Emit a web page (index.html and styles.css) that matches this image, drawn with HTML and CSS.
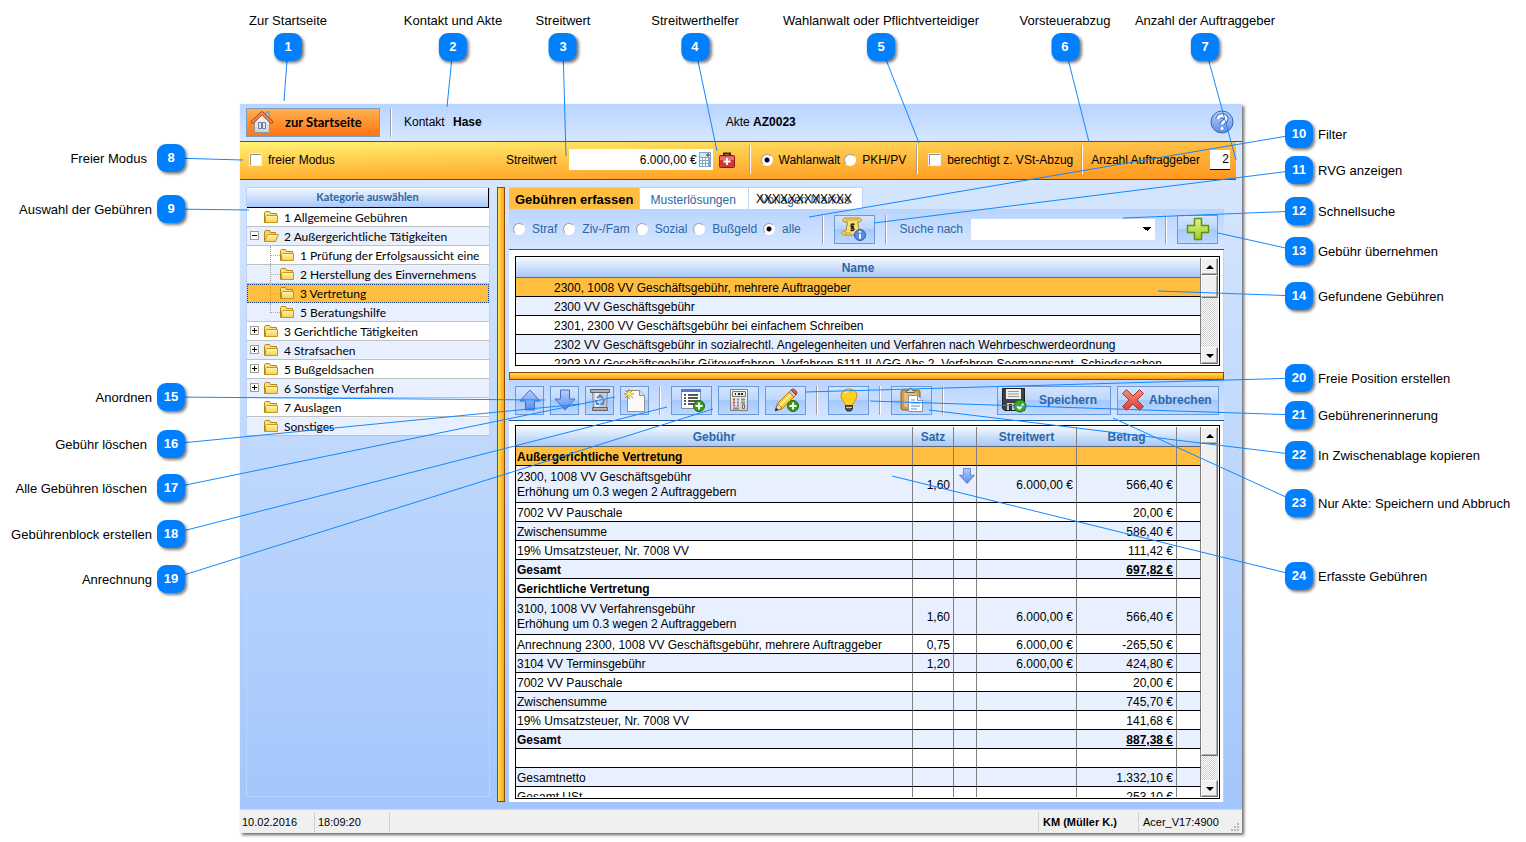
FILE: index.html
```html
<!DOCTYPE html>
<html lang="de">
<head>
    <meta charset="utf-8">
    <title>Gebühren erfassen</title>
    <link rel="stylesheet" href="styles.css">
</head>
<body>
    <svg class="defs" width="0" height="0" aria-hidden="true">
        <defs>
            <linearGradient id="gBlue" x1="0" y1="0" x2="0" y2="1"><stop offset="0" stop-color="#b4d0ff"/><stop offset="1" stop-color="#5c8ce8"/></linearGradient>
            <linearGradient id="gFolder" x1="0" y1="0" x2="0" y2="1"><stop offset="0" stop-color="#fff6b0"/><stop offset="1" stop-color="#f4cf52"/></linearGradient>
            <linearGradient id="gGreen" x1="0" y1="0" x2="0" y2="1"><stop offset="0" stop-color="#e2f08a"/><stop offset="1" stop-color="#a4cc28"/></linearGradient>
            <linearGradient id="gRed" x1="0" y1="0" x2="0" y2="1"><stop offset="0" stop-color="#f49070"/><stop offset="1" stop-color="#d83c3c"/></linearGradient>
            <linearGradient id="gGrey" x1="0" y1="0" x2="0" y2="1"><stop offset="0" stop-color="#ffffff"/><stop offset="1" stop-color="#d0d0d0"/></linearGradient>
        </defs>
        <symbol id="folder" viewBox="0 0 16 14">
            <path d="M1.5 12.5V2.5L2.5 1.5H6.5L7.5 3.5H13.5V12.5Z" fill="#f9e28a" stroke="#b8860b"/>
            <path d="M3.5 5.5H14.5V12.5H2.5V6.5Z" fill="url(#gFolder)" stroke="#c8961e"/>
        </symbol>
        <symbol id="folder-open" viewBox="0 0 16 14">
            <path d="M1.5 12.5V2.5L2.5 1.5H6.5L7.5 3.5H12.5V12.5Z" fill="#f3d468" stroke="#b8860b"/>
            <path d="M4.5 5.5H15.5L12.5 12.5H1.5Z" fill="url(#gFolder)" stroke="#c8961e"/>
        </symbol>
        <symbol id="arrow-up" viewBox="0 0 24 24">
            <path d="M12 2L22 13H16.500V22H7.500V13H2Z" fill="url(#gBlue)" stroke="#4a6eb8" stroke-linejoin="round"/>
        </symbol>
        <symbol id="arrow-down" viewBox="0 0 24 24">
            <path d="M12 22L2 11H7.500V2H16.500V11H22Z" fill="url(#gBlue)" stroke="#4a6eb8" stroke-linejoin="round"/>
        </symbol>
        <symbol id="badge-plus" viewBox="0 0 12 12">
            <circle cx="6" cy="6" r="5.500" fill="#3a9c1c" stroke="#226a0c"/>
            <path d="M6 2.500V9.500M2.500 6H9.500" stroke="#fff" stroke-width="2"/>
        </symbol>
    </svg>

    <main class="window">
        <header class="titlebar">
            <button type="button" class="home">
                <svg width="24" height="24" viewBox="0 0 24 24">
                    <path d="M16 2H19V9H16Z" fill="#b8c4d8" stroke="#7888a4"/>
                    <path d="M4.500 12L12 4L19.500 12V22.500H4.500Z" fill="url(#gGrey)" stroke="#8c96a8"/>
                    <path d="M2.500 12L12 3L21.500 12" fill="none" stroke="#a03c10" stroke-width="3.500" stroke-linejoin="round" stroke-linecap="round"/>
                    <path d="M2.500 12L12 3L21.500 12" fill="none" stroke="#f08a4c" stroke-width="2" stroke-linejoin="round" stroke-linecap="round"/>
                    <path d="M8.500 12.500H11.500V18.500H8.500ZM12.500 12.500H15.500V18.500H12.500Z" fill="#dfe8f6" stroke="#6c7c98"/>
                </svg>
                <span>zur Startseite</span>
            </button>
            <span class="sep"></span>
            <span class="contact">Kontakt <b>Hase</b></span>
            <span class="akte">Akte <b>AZ0023</b></span>
            <button type="button" class="help" aria-label="Hilfe">
                <svg width="24" height="24" viewBox="0 0 24 24">
                    <circle cx="12" cy="12" r="11" fill="url(#gBlue)" stroke="#3c64b4"/>
                    <path d="M8 9C8 4.500 16 4.500 16 9C16 12 12 11.500 12 14.500" fill="none" stroke="#3c64b4" stroke-width="5"/>
                    <path d="M8 9C8 4.500 16 4.500 16 9C16 12 12 11.500 12 14.500" fill="none" stroke="#fff" stroke-width="3"/>
                    <circle cx="12" cy="18.500" r="2" fill="#fff" stroke="#3c64b4" stroke-width=".5"/>
                </svg>
            </button>
        </header>

        <form class="options">
            <label class="check free"><input type="checkbox"> freier Modus</label>
            <label for="streitwert" class="value-label">Streitwert</label>
            <div class="value-box">
                <input type="text" id="streitwert" value="6.000,00 €">
                <svg width="12" height="15" viewBox="0 0 12 15">
                    <path d="M0 0H12V15H0Z" fill="#7fa8c8"/><path d="M1 1H11V5H1Z" fill="#d4e8f4"/><path d="M7 1H11V5H7Z" fill="#fff"/><circle cx="9" cy="3" r="1.200" fill="none" stroke="#222"/>
                    <path d="M1 6H3V8H1ZM4 6H6V8H4ZM7 6H9V8H7ZM1 9H3V11H1ZM4 9H6V11H4ZM7 9H9V11H7ZM1 12H3V14H1ZM4 12H6V14H4ZM7 12H9V14H7Z" fill="#fff"/>
                </svg>
            </div>
            <button type="button" class="kit" aria-label="Streitwerthelfer">
                <svg width="16" height="16" viewBox="0 0 16 16">
                    <path d="M5 4V1.500H11V4" fill="none" stroke="#402018" stroke-width="2"/>
                    <rect x=".5" y="3.500" width="15" height="12" rx="1" fill="#d03838" stroke="#8c1c1c"/>
                    <path d="M1 4.500H15V8H1Z" fill="#e87070"/>
                    <path d="M8 6V13M4.500 9.500H11.500" stroke="#fff" stroke-width="2"/>
                </svg>
            </button>
            <span class="sep"></span>
            <label class="check"><input type="radio" name="anwalt" checked> Wahlanwalt</label>
            <label class="check"><input type="radio" name="anwalt"> PKH/PV</label>
            <span class="sep"></span>
            <label class="check"><input type="checkbox"> berechtigt z. VSt-Abzug</label>
            <span class="sep narrow"></span>
            <label for="anzahl">Anzahl Auftraggeber</label>
            <input type="text" id="anzahl" class="count" value="2">
        </form>

        <div class="work">
            <section class="categories">
                <h2>Kategorie auswählen</h2>
                <ul class="tree">
                    <li><svg><use href="#folder"/></svg>1 Allgemeine Gebühren</li>
                    <li><button type="button" class="toggle open" aria-label="Zuklappen"></button><svg><use href="#folder-open"/></svg>2 Außergerichtliche Tätigkeiten</li>
                    <li class="child"><svg><use href="#folder"/></svg>1 Prüfung der Erfolgsaussicht eine</li>
                    <li class="child"><svg><use href="#folder"/></svg>2 Herstellung des Einvernehmens</li>
                    <li class="child selected"><svg><use href="#folder"/></svg>3 Vertretung</li>
                    <li class="child last"><svg><use href="#folder"/></svg>5 Beratungshilfe</li>
                    <li><button type="button" class="toggle" aria-label="Aufklappen"></button><svg><use href="#folder"/></svg>3 Gerichtliche Tätigkeiten</li>
                    <li><button type="button" class="toggle" aria-label="Aufklappen"></button><svg><use href="#folder"/></svg>4 Strafsachen</li>
                    <li><button type="button" class="toggle" aria-label="Aufklappen"></button><svg><use href="#folder"/></svg>5 Bußgeldsachen</li>
                    <li><button type="button" class="toggle" aria-label="Aufklappen"></button><svg><use href="#folder"/></svg>6 Sonstige Verfahren</li>
                    <li><svg><use href="#folder"/></svg>7 Auslagen</li>
                    <li><svg><use href="#folder"/></svg>Sonstiges</li>
                </ul>
            </section>

            <div class="splitter-v"></div>

            <section class="fees">
                <nav class="tabs">
                    <button type="button" class="tab active">Gebühren erfassen</button>
                    <button type="button" class="tab">Musterlösungen</button>
                    <button type="button" class="tab crossed">Vorlagen Markus<span>XXXXXXXXXXXX</span></button>
                </nav>

                <form class="toolbar filter">
                    <label class="check"><input type="radio" name="filter"> Straf</label>
                    <label class="check"><input type="radio" name="filter"> Ziv-/Fam</label>
                    <label class="check"><input type="radio" name="filter"> Sozial</label>
                    <label class="check"><input type="radio" name="filter"> Bußgeld</label>
                    <label class="check"><input type="radio" name="filter" checked> alle</label>
                    <span class="sep push"></span>
                    <button type="button" class="tool wide" aria-label="RVG anzeigen">
                        <svg width="26" height="26" viewBox="0 0 26 26">
                            <path d="M4 2H18C21 2 21 6 18 6H16.500L19 19H6L3.500 19C0 19 0 15 3.500 15H5L6.500 6H4C1 6 1 2 4 2Z" fill="#f8e070" stroke="#b08a1c"/>
                            <path d="M4 4H18M3 17H10" stroke="#c8a030"/>
                            <path d="M13.500 8.500C10 7 9 10 11.500 11.500C14.500 13 12.500 15.500 9.500 14M13 10.500C10 9.500 9.500 12 11.500 13" fill="none" stroke="#222" stroke-width="1.400"/>
                            <circle cx="19" cy="19" r="5.500" fill="#5c8ce0" stroke="#2c58ac"/>
                            <path d="M19 15V16.800M19 18V22.500" stroke="#fff" stroke-width="2"/>
                        </svg>
                    </button>
                    <span class="sep"></span>
                    <label for="suche" class="search-label">Suche nach</label>
                    <select id="suche"><option></option></select>
                    <span class="sep"></span>
                    <button type="button" class="tool wide" aria-label="Gebühr übernehmen">
                        <svg width="24" height="24" viewBox="0 0 24 24"><path d="M8.500 1.500H15.500V8.500H22.500V15.500H15.500V22.500H8.500V15.500H1.500V8.500H8.500Z" fill="url(#gGreen)" stroke="#5c9410" stroke-width="1.500" stroke-linejoin="round"/></svg>
                    </button>
                </form>

                <div class="panel found">
                    <div class="grid-box">
                        <div class="grid-view">
                            <table class="grid names">
                                <thead><tr><th>Name</th></tr></thead>
                                <tbody>
                                    <tr class="current"><td>2300, 1008 VV Geschäftsgebühr, mehrere Auftraggeber</td></tr>
                                    <tr><td>2300 VV Geschäftsgebühr</td></tr>
                                    <tr><td>2301, 2300 VV Geschäftsgebühr bei einfachem Schreiben</td></tr>
                                    <tr><td>2302 VV Geschäftsgebühr in sozialrechtl. Angelegenheiten und Verfahren nach Wehrbeschwerdeordnung</td></tr>
                                    <tr><td>2303 VV Geschäftsgebühr Güteverfahren, Verfahren §111 II AGG Abs.2, Verfahren Seemannsamt, Schiedssachen</td></tr>
                                </tbody>
                            </table>
                        </div>
                        <div class="scrollbar">
                            <button type="button" class="up" aria-label="Nach oben"></button>
                            <div class="thumb"></div>
                            <button type="button" class="down" aria-label="Nach unten"></button>
                        </div>
                    </div>
                </div>

                <div class="splitter-h"></div>

                <div class="toolbar actions">
                    <button type="button" class="tool" aria-label="Nach oben"><svg width="24" height="24"><use href="#arrow-up"/></svg></button>
                    <button type="button" class="tool" aria-label="Nach unten"><svg width="24" height="24"><use href="#arrow-down"/></svg></button>
                    <button type="button" class="tool" aria-label="Gebühr löschen">
                        <svg width="24" height="24" viewBox="0 0 24 24">
                            <path d="M4.500 4H19.500L18.500 20H5.500Z" fill="#c4ccd8" stroke="#888"/>
                            <path d="M7 5H11V20H7Z" fill="#eceff4"/>
                            <path d="M2.500 1.500H21.500V4.500H2.500ZM4.500 19.500H19.500V22.500H4.500Z" fill="#b0b0b0" stroke="#606060"/>
                            <path d="M9 10L12 7.500L15 10M16 12L15 16H12.500M8 12L9 16H11" fill="none" stroke="#5080d8" stroke-width="2"/>
                        </svg>
                    </button>
                    <button type="button" class="tool" aria-label="Alle Gebühren löschen">
                        <svg width="24" height="24" viewBox="0 0 24 24">
                            <path d="M4.500 2.500H16.500L21.500 7.500V23.500H4.500Z" fill="#fafafa" stroke="#909090"/>
                            <path d="M16.500 2.500V7.500H21.500" fill="#ddd" stroke="#909090"/>
                            <path d="M6 1V11M1 6H11M2 2L10 10M10 2L2 10" stroke="#b89000"/><circle cx="6" cy="6" r="2" fill="#fff060"/>
                        </svg>
                    </button>
                    <span class="sep"></span>
                    <button type="button" class="tool wide" aria-label="Gebührenblock erstellen">
                        <svg width="26" height="26" viewBox="0 0 26 26">
                            <path d="M2.500 2.500H21.500V21.500H2.500Z" fill="#fff" stroke="#8090a8"/><path d="M2 2H22V5H2Z" fill="#4c7cd8"/>
                            <path d="M5 8H7M5 11H7M5 14H7M5 17H7M9 8H19M9 11H19M9 14H19M9 17H15" stroke="#222" stroke-width="1.500"/>
                            <use href="#badge-plus" x="14" y="13" width="12" height="12"/>
                        </svg>
                    </button>
                    <button type="button" class="tool wide" aria-label="Anrechnung">
                        <svg width="24" height="24" viewBox="0 0 24 24">
                            <path d="M3.500 1.500H20.500V22.500H3.500Z" fill="url(#gGrey)" stroke="#808080"/>
                            <path d="M5.500 3.500H18.500V8.500H5.500Z" fill="#e0ece0" stroke="#707870"/>
                            <path d="M8 6H9M11 6H13M14 6H16" stroke="#222" stroke-width="2"/>
                            <path d="M6 11.500H8M6 14.500H8" stroke="#c83c3c" stroke-width="2"/>
                            <path d="M10 11.500H12M14 11.500H18M10 14.500H12M14 14.500H18M6 17.500H8M10 17.500H12M6 20.500H12" stroke="#888" stroke-width="2"/>
                            <path d="M15.500 16.500H17.500V20.500H15.500Z" fill="#ddd" stroke="#666"/>
                        </svg>
                    </button>
                    <button type="button" class="tool wide" aria-label="Freie Position erstellen">
                        <svg width="26" height="26" viewBox="0 0 26 26">
                            <path d="M2 24L4.500 16.500L9.500 21.500Z" fill="#f0d8b0" stroke="#806030"/><path d="M2 24L3 20.500L5.500 23Z" fill="#333"/>
                            <path d="M4.500 16.500L16 5L21 10L9.500 21.500Z" fill="#f8c838" stroke="#b88414"/><path d="M7 18.500L18 7.500" stroke="#fff090" stroke-width="2"/>
                            <path d="M16 5L18 3L23 8L21 10Z" fill="#c8ccd0" stroke="#888"/><path d="M18 3C20 0 26 5 23 8Z" fill="#e05858" stroke="#a83030"/>
                            <use href="#badge-plus" x="14" y="13" width="12" height="12"/>
                        </svg>
                    </button>
                    <span class="sep"></span>
                    <button type="button" class="tool wide" aria-label="Gebührenerinnerung">
                        <svg width="24" height="24" viewBox="0 0 24 24">
                            <path d="M12 1C6 1 3 5 4.500 10C5.500 13 8 14 8.500 17.500H15.500C16 14 18.500 13 19.500 10C21 5 18 1 12 1Z" fill="#ffd020" stroke="#d09000"/>
                            <path d="M8 5C9 3 11 3 12 3" fill="none" stroke="#fff8b0" stroke-width="2"/>
                            <path d="M8.500 17.500H15.500V21L14 23H10L8.500 21Z" fill="#555" stroke="#333"/><path d="M9 19.500H15" stroke="#ccc"/>
                        </svg>
                    </button>
                    <span class="sep"></span>
                    <button type="button" class="tool wide" aria-label="In Zwischenablage kopieren">
                        <svg width="26" height="26" viewBox="0 0 26 26">
                            <rect x="2" y="3" width="19" height="20" rx="2" fill="#d09c4c" stroke="#8c6424"/><path d="M5 6H18V20H5Z" fill="#e4bc78"/>
                            <path d="M7.500 5.500V3.500H9.500C9.500 .5 13.500 .5 13.500 3.500H15.500V5.500Z" fill="#d8d8d8" stroke="#666"/>
                            <path d="M9.500 8.500H18.500L23.500 13.500V24.500H9.500Z" fill="#fff" stroke="#8494b0"/><path d="M18.500 8.500V13.500H23.500" fill="#dde6f4" stroke="#8494b0"/>
                            <path d="M12 13H16M12 16H21M12 19H21M12 22H18" stroke="#5c8cd8"/>
                        </svg>
                    </button>
                    <span class="sep"></span>
                    <button type="button" class="tool save">
                        <svg width="26" height="26" viewBox="0 0 26 26">
                            <path d="M1.500 1.500H23.500V23.500H3.500L1.500 21.500Z" fill="#3c4048" stroke="#202020"/><path d="M5 2H20V12H5Z" fill="#f0f0f0"/>
                            <path d="M7 4.500H18M7 7H18M7 9.500H18" stroke="#999"/><path d="M6 16H18V23H6Z" fill="#c4ccd4"/><path d="M8 17H11V23H8Z" fill="#333"/>
                            <circle cx="19" cy="19" r="6" fill="#3aac24" stroke="#1c7410"/><path d="M16 19L18.500 21.500L22.500 17" fill="none" stroke="#fff" stroke-width="2"/>
                        </svg>
                        <span>Speichern</span>
                    </button>
                    <button type="button" class="tool cancel">
                        <svg width="24" height="24" viewBox="0 0 24 24"><path d="M5.500 1.500L12 8L18.500 1.500L22.500 5.500L16 12L22.500 18.500L18.500 22.500L12 16L5.500 22.500L1.500 18.500L8 12L1.500 5.500Z" fill="url(#gRed)" stroke="#a83430" stroke-linejoin="round"/></svg>
                        <span>Abbrechen</span>
                    </button>
                </div>

                <div class="panel recorded">
                    <div class="grid-box">
                        <div class="grid-view">
                            <table class="grid positions">
                                <colgroup><col><col class="c-satz"><col class="c-icon"><col class="c-money"><col class="c-money"><col class="c-end"></colgroup>
                                <thead><tr><th>Gebühr</th><th>Satz</th><th></th><th>Streitwert</th><th>Betrag</th><th></th></tr></thead>
                                <tbody>
                                    <tr class="current"><td><b>Außergerichtliche Vertretung</b></td><td></td><td></td><td></td><td></td><td></td></tr>
                                    <tr class="double"><td>2300, 1008 VV Geschäftsgebühr<br>Erhöhung um 0.3 wegen 2 Auftraggebern</td><td>1,60</td><td class="mark"><svg width="18" height="18"><use href="#arrow-down"/></svg></td><td>6.000,00 €</td><td>566,40 €</td><td></td></tr>
                                    <tr><td>7002 VV Pauschale</td><td></td><td></td><td></td><td>20,00 €</td><td></td></tr>
                                    <tr><td>Zwischensumme</td><td></td><td></td><td></td><td>586,40 €</td><td></td></tr>
                                    <tr><td>19% Umsatzsteuer, Nr. 7008 VV</td><td></td><td></td><td></td><td>111,42 €</td><td></td></tr>
                                    <tr class="sum"><td>Gesamt</td><td></td><td></td><td></td><td><u>697,82 €</u></td><td></td></tr>
                                    <tr><td><b>Gerichtliche Vertretung</b></td><td></td><td></td><td></td><td></td><td></td></tr>
                                    <tr class="double"><td>3100, 1008 VV Verfahrensgebühr<br>Erhöhung um 0.3 wegen 2 Auftraggebern</td><td>1,60</td><td></td><td>6.000,00 €</td><td>566,40 €</td><td></td></tr>
                                    <tr><td>Anrechnung 2300, 1008 VV Geschäftsgebühr, mehrere Auftraggeber</td><td>0,75</td><td></td><td>6.000,00 €</td><td>-265,50 €</td><td></td></tr>
                                    <tr><td>3104 VV Terminsgebühr</td><td>1,20</td><td></td><td>6.000,00 €</td><td>424,80 €</td><td></td></tr>
                                    <tr><td>7002 VV Pauschale</td><td></td><td></td><td></td><td>20,00 €</td><td></td></tr>
                                    <tr><td>Zwischensumme</td><td></td><td></td><td></td><td>745,70 €</td><td></td></tr>
                                    <tr><td>19% Umsatzsteuer, Nr. 7008 VV</td><td></td><td></td><td></td><td>141,68 €</td><td></td></tr>
                                    <tr class="sum"><td>Gesamt</td><td></td><td></td><td></td><td><u>887,38 €</u></td><td></td></tr>
                                    <tr><td></td><td></td><td></td><td></td><td></td><td></td></tr>
                                    <tr><td>Gesamtnetto</td><td></td><td></td><td></td><td>1.332,10 €</td><td></td></tr>
                                    <tr><td>Gesamt USt</td><td></td><td></td><td></td><td>253,10 €</td><td></td></tr>
                                </tbody>
                            </table>
                        </div>
                        <div class="scrollbar">
                            <button type="button" class="up" aria-label="Nach oben"></button>
                            <div class="thumb"></div>
                            <button type="button" class="down" aria-label="Nach unten"></button>
                        </div>
                    </div>
                </div>
            </section>
        </div>

        <footer class="status">
            <span class="date">10.02.2016</span>
            <span class="time">18:09:20</span>
            <span class="user">KM (Müller K.)</span>
            <span class="host">Acer_V17:4900</span>
            <svg width="9" height="9" viewBox="0 0 9 9"><path d="M6 0H8V2H6ZM3 3H5V5H3ZM6 3H8V5H6ZM0 6H2V8H0ZM3 6H5V8H3ZM6 6H8V8H6Z" fill="#b8b8b8"/></svg>
        </footer>
    </main>

    <!-- callouts over the program window -->
    <svg class="leaders" width="1526" height="842" viewBox="0 0 1526 842" aria-hidden="true">
        <path d="M288 47L284 101M453 47L447 107M563 47L566 156M695 47L717 151M881 47L919 143M1065 47L1089 142M1205 47L1236 160"/>
        <path d="M171 158L243 160M171 209L249 210M171 397L545 400M171 444L580 404M171 488L615 397M171 534L667 407M171 579L713 409"/>
        <path d="M1299 134L809 217M1299 170L874 223M1299 211L1123 218M1299 251L1218 233M1299 296L1158 291"/>
        <path d="M1299 378L805 392M1299 415L870 401M1299 455L929 410M1299 503L1113 418M1299 576L892 476"/>
    </svg>
    <div class="pin top p1">Zur Startseite<b>1</b></div>
    <div class="pin top p2">Kontakt und Akte<b>2</b></div>
    <div class="pin top p3">Streitwert<b>3</b></div>
    <div class="pin top p4">Streitwerthelfer<b>4</b></div>
    <div class="pin top p5">Wahlanwalt oder Pflichtverteidiger<b>5</b></div>
    <div class="pin top p6">Vorsteuerabzug<b>6</b></div>
    <div class="pin top p7">Anzahl der Auftraggeber<b>7</b></div>
    <div class="pin left far p8">Freier Modus<b>8</b></div>
    <div class="pin left p9">Auswahl der Gebühren<b>9</b></div>
    <div class="pin left p15">Anordnen<b>15</b></div>
    <div class="pin left far p16">Gebühr löschen<b>16</b></div>
    <div class="pin left far p17">Alle Gebühren löschen<b>17</b></div>
    <div class="pin left p18">Gebührenblock erstellen<b>18</b></div>
    <div class="pin left p19">Anrechnung<b>19</b></div>
    <div class="pin right p10"><b>10</b>Filter</div>
    <div class="pin right p11"><b>11</b>RVG anzeigen</div>
    <div class="pin right p12"><b>12</b>Schnellsuche</div>
    <div class="pin right p13"><b>13</b>Gebühr übernehmen</div>
    <div class="pin right p14"><b>14</b>Gefundene Gebühren</div>
    <div class="pin right p20"><b>20</b>Freie Position erstellen</div>
    <div class="pin right p21"><b>21</b>Gebührenerinnerung</div>
    <div class="pin right p22"><b>22</b>In Zwischenablage kopieren</div>
    <div class="pin right p23"><b>23</b>Nur Akte: Speichern und Abbruch</div>
    <div class="pin right p24"><b>24</b>Erfasste Gebühren</div>
</body>
</html>
```

FILE: styles.css
```css
* {
    box-sizing: border-box;
}
body {
    margin: 0;
    height: 100vh;
    padding: 104px 284px 9px 240px;
    position: relative;
    overflow: hidden;
    background: #fff;
    color: #000;
    font-family: "Liberation Sans", Arial, sans-serif;
    font-size: 12px;
}
button, input, select {
    font: inherit;
    color: inherit;
    margin: 0;
    padding: 0;
    border: 0;
    border-radius: 0;
}
button {
    background: none;
}
svg {
    display: block;
    flex: none;
}
.defs {
    position: absolute;
}

/* window */
.window {
    height: 100%;
    display: flex;
    flex-direction: column;
    background: linear-gradient(#dbe9fe, #a0c5fb);
    box-shadow: 2px 2px 3px rgba(0, 0, 0, 0.6);
}
.titlebar {
    flex: none;
    display: flex;
    align-items: center;
    height: 38px;
    padding: 0 8px 1px 6px;
    border-bottom: 1px solid #1c5a9c;
    background: linear-gradient(#b9d5ff, #d6e6ff);
}
.home {
    display: flex;
    align-items: center;
    gap: 11px;
    width: 134px;
    height: 29px;
    padding-left: 3px;
    border: 1px solid #7c9cc8;
    background: linear-gradient(#ffb050, #ff7410);
    font-family: Lato, sans-serif;
    font-size: 13px;
    font-weight: bold;
}
.sep {
    flex: none;
    width: 2px;
    height: 29px;
    border-left: 1px solid #a0a0a0;
    border-right: 1px solid #fff;
}
.titlebar .sep {
    margin: 0 12px 0 10px;
}
.contact b {
    margin-left: 5px;
}
.akte {
    margin-left: 244px;
}
.help {
    margin-left: auto;
}

/* orange bar */
.options {
    flex: none;
    display: flex;
    align-items: center;
    height: 38px;
    margin-right: 6px;
    padding: 0 6px 2px 9px;
    border-bottom: 1px solid #1c5a9c;
    background: linear-gradient(90deg, transparent, rgba(255, 110, 0, 0.4)), linear-gradient(#fff474, #ffb030);
}
.check {
    display: flex;
    align-items: center;
    gap: 6px;
    white-space: nowrap;
}
input[type=checkbox], input[type=radio] {
    appearance: none;
    width: 13px;
    height: 13px;
    background: #fff;
    border: 1px solid #f0f0f0;
    box-shadow: inset 1px 1px 0 #909090;
}
input[type=radio] {
    width: 12px;
    height: 12px;
    border-radius: 50%;
    border-color: #a0a0a0 #fff #fff #a0a0a0;
    box-shadow: none;
}
input[type=radio]:checked {
    background: radial-gradient(circle, #000 2px, #fff 3px);
}
.value-label {
    margin-left: auto;
}
.value-box {
    display: flex;
    align-items: center;
    width: 144px;
    height: 21px;
    margin: 0 6px 0 12px;
    padding-right: 2px;
    background: #fff;
}
.value-box input {
    flex: 1;
    min-width: 0;
    text-align: right;
    margin-right: 2px;
    background: none;
}
.options .sep {
    margin: 0 10px;
}
.kit + .sep {
    margin-left: 14px;
}
.options .narrow {
    margin: 0 8px;
}
.options .check + .check {
    margin-left: 4px;
}
.count {
    width: 20px;
    height: 20px;
    margin-left: 10px;
    padding-right: 1px;
    text-align: right;
    background: #fff;
    border-bottom: 1px solid #000;
}

/* category tree */
.work {
    flex: 1;
    min-height: 0;
    display: flex;
    padding: 7px 18px 7px 6px;
}
.categories {
    flex: none;
    width: 244px;
    margin: 0 7px 5px 0;
    border: 1px solid #b9d5fc;
    overflow: hidden;
}
.categories h2 {
    margin: 0;
    height: 20px;
    line-height: 18px;
    text-align: center;
    font-family: Lato, sans-serif;
    font-size: 11px;
    color: #2c66a4;
    background: linear-gradient(#f2f8ff, #a8c8f8);
    border-right: 1px solid #000;
    border-bottom: 1px solid #000;
}
.tree {
    margin: 0;
    padding: 0;
    list-style: none;
    font-family: Lato, sans-serif;
}
.tree li {
    position: relative;
    display: flex;
    align-items: center;
    height: 19px;
    padding-left: 16px;
    background: #fff;
    border-bottom: 1px solid #c0c0c0;
    white-space: nowrap;
    overflow: hidden;
}
.tree li:nth-child(even) {
    background: #e8efff;
}
.tree li.child {
    padding-left: 32px;
}
.tree li.selected {
    background: #ffbe40;
    outline: 1px dotted #1c3c80;
    outline-offset: -1px;
}
.tree svg {
    width: 16px;
    height: 14px;
    margin-right: 5px;
}
.tree .toggle {
    position: absolute;
    left: 3px;
    top: 4px;
    width: 9px;
    height: 9px;
    border: 1px solid #a0a090;
    background: linear-gradient(#000, #000) center / 5px 1px no-repeat, linear-gradient(#000, #000) center / 1px 5px no-repeat, #fff;
}
.tree .toggle.open {
    background: linear-gradient(#000, #000) center / 5px 1px no-repeat, #fff;
}
.tree .child::before {
    content: "";
    position: absolute;
    left: 23px;
    top: 0;
    width: 9px;
    height: 100%;
    border-left: 1px dotted #a0a0a0;
    background: repeating-linear-gradient(90deg, #b0b0b0 0 1px, transparent 1px 2px) 0 9px / 9px 1px no-repeat;
}
.tree .last::before {
    height: 10px;
}

/* splitters */
.splitter-v {
    flex: none;
    width: 8px;
    margin-right: 4px;
    border: 1px solid #904800;
    background: linear-gradient(90deg, #ffe458, #ffa018);
}
.splitter-h {
    flex: none;
    height: 8px;
    border: 1px solid #904800;
    background: linear-gradient(#ffe050, #ff9810);
}

/* right side */
.fees {
    flex: 1;
    min-width: 0;
    display: flex;
    flex-direction: column;
}
.tabs {
    flex: none;
    display: flex;
    height: 22px;
}
.tab {
    position: relative;
    padding: 2px 12px 0 11px;
    background: #fff;
    border: 1px solid #b9d5fc;
    border-left: 0;
    border-bottom: 0;
    color: #2c66a4;
}
.tab.active {
    padding: 2px 5px 0 6px;
    background: #ffbe40;
    color: #000;
    font-size: 13px;
    font-weight: bold;
}
.tab span {
    position: absolute;
    left: 7px;
    top: 4px;
    color: #000;
}
.toolbar {
    flex: none;
    display: flex;
    align-items: center;
    height: 41px;
    padding: 0 5px 0 6px;
    border-bottom: 1px solid #1c5a9c;
    background: linear-gradient(#b9d5ff, #d6e6ff);
    color: #2c66a4;
}
.tool {
    flex: none;
    display: flex;
    align-items: center;
    justify-content: center;
    width: 29px;
    height: 29px;
    border: 1px solid #6c98d8;
    background: linear-gradient(#d4e4fe, #bcd6ff 48%, #a6c8fc 50%, #bcd8ff);
}
.tool.wide {
    width: 41px;
}
.filter {
    padding: 0 6px 0 4px;
}
.filter .check {
    gap: 7px;
    margin-right: 6px;
}
.filter .sep {
    margin: 0 10px;
}
.filter .push {
    margin-left: auto;
}
.search-label {
    margin: 0 8px 0 3px;
}
#suche {
    width: 184px;
    height: 21px;
    appearance: none;
    background: linear-gradient(45deg, transparent 50%, #000 50%) 172px 8px / 4px 4px no-repeat, linear-gradient(315deg, transparent 50%, #000 50%) 176px 8px / 4px 4px no-repeat, #fff;
}
.panel {
    flex: none;
    padding: 6px 3px 6px 6px;
    background: #fff;
    border-right: 1px solid #b9d5fc;
}
.found {
    height: 122px;
}
.recorded {
    flex: 1;
    min-height: 0;
    padding: 4px 3px 3px 6px;
}
.grid-box {
    display: flex;
    height: 100%;
    border: 1px solid #000;
    padding: 1px 1px 1px 0;
}
.grid-view {
    flex: 1;
    min-width: 0;
    overflow: hidden;
}
.grid {
    width: 100%;
    table-layout: fixed;
    border-collapse: separate;
    border-spacing: 0;
}
.grid th {
    height: 20px;
    padding: 0;
    color: #2c66a4;
    background: linear-gradient(#f2f8ff, #a8c8f8);
    border-bottom: 1px solid #606870;
    border-right: 1px solid #808080;
}
.grid td {
    height: 19px;
    padding: 2px 3px 0 1px;
    line-height: 15px;
    white-space: nowrap;
    border-bottom: 1px solid #000;
    border-right: 1px solid #808080;
}
.grid tbody tr:nth-child(even) {
    background: #e8efff;
}
.grid tbody tr.current {
    background: #ffbe40;
}
.names td {
    padding-left: 38px;
}
.positions .double td {
    height: 37px;
}
.positions td:nth-child(n+2) {
    text-align: right;
}
.positions .mark {
    padding: 1px 0 0 4px;
    vertical-align: top;
}
.sum {
    font-weight: bold;
}
.c-satz {
    width: 41px;
}
.c-icon {
    width: 23px;
}
.c-money {
    width: 100px;
}
.c-end {
    width: 24px;
}
.scrollbar {
    flex: none;
    display: flex;
    flex-direction: column;
    width: 17px;
    background: repeating-conic-gradient(#d0d0d0 0 25%, #fff 0 50%) 0 0 / 2px 2px;
}
.scrollbar button, .thumb {
    flex: none;
    height: 17px;
    background: #f0f0f0;
    border: 1px solid;
    border-color: #fff #707070 #707070 #fff;
    box-shadow: inset -1px -1px 0 #b0b0b0;
}
.scrollbar button::before {
    content: "";
    display: block;
    width: 0;
    margin: 0 auto;
    border: 4px solid transparent;
    border-top: 0;
    border-bottom-color: #000;
}
.scrollbar .down::before {
    border-top: 4px solid #000;
    border-bottom: 0;
}
.scrollbar .down {
    margin-top: auto;
}
.thumb {
    height: 23px;
}
.recorded .thumb {
    flex: 0 1 312px;
}

/* action buttons */
.actions {
    gap: 6px;
}
.actions .sep {
    margin: 0 4px;
}
.actions .save, .actions .cancel {
    justify-content: flex-start;
    padding-left: 3px;
    font-weight: bold;
}
.save {
    width: 114px;
    margin-left: auto;
    gap: 12px;
}
.cancel {
    width: 102px;
    gap: 4px;
}

/* status bar */
.status {
    flex: none;
    display: flex;
    align-items: center;
    height: 24px;
    padding: 1px 2px;
    background: #f0f0f0;
    border-top: 1px solid #d8d8d8;
    font-size: 11px;
}
.status span {
    height: 20px;
    line-height: 20px;
}
.date {
    width: 73px;
    border-right: 1px solid #d0d0d0;
}
.time {
    width: 75px;
    padding-left: 3px;
    border-right: 1px solid #d0d0d0;
}
.user {
    width: 101px;
    margin-left: auto;
    padding-left: 4px;
    border: solid #d0d0d0;
    border-width: 0 1px;
    font-weight: bold;
}
.host {
    width: 92px;
    padding-left: 4px;
}
.status svg {
    align-self: flex-end;
}

/* callouts */
.leaders {
    position: absolute;
    left: 0;
    top: 0;
    fill: none;
    stroke: #1488ff;
    stroke-width: 1;
    pointer-events: none;
}
.pin {
    position: absolute;
    display: flex;
    align-items: center;
    gap: 5px;
    height: 28px;
    font-size: 13px;
    white-space: nowrap;
    transform: translateY(-50%);
}
.pin b {
    width: 28px;
    height: 28px;
    line-height: 28px;
    border-radius: 9px;
    background: #0080ff;
    color: #fff;
    text-align: center;
    box-shadow: 2px 2px 3px rgba(0, 0, 0, 0.5);
}
.pin.top {
    top: 13px;
    height: auto;
    flex-direction: column;
    transform: translateX(-50%);
}
.pin.left {
    left: 0;
    width: 185px;
    justify-content: flex-end;
}
.pin.far {
    gap: 10px;
}
.pin.right {
    left: 1285px;
}
.p1 { left: 288px; }
.p2 { left: 453px; }
.p3 { left: 563px; }
.p4 { left: 695px; }
.p5 { left: 881px; }
.p6 { left: 1065px; }
.p7 { left: 1205px; }
.p8 { top: 158px; }
.p9 { top: 209px; }
.p10 { top: 134px; }
.p11 { top: 170px; }
.p12 { top: 211px; }
.p13 { top: 251px; }
.p14 { top: 296px; }
.p15 { top: 397px; }
.p16 { top: 444px; }
.p17 { top: 488px; }
.p18 { top: 534px; }
.p19 { top: 579px; }
.p20 { top: 378px; }
.p21 { top: 415px; }
.p22 { top: 455px; }
.p23 { top: 503px; }
.p24 { top: 576px; }
```
